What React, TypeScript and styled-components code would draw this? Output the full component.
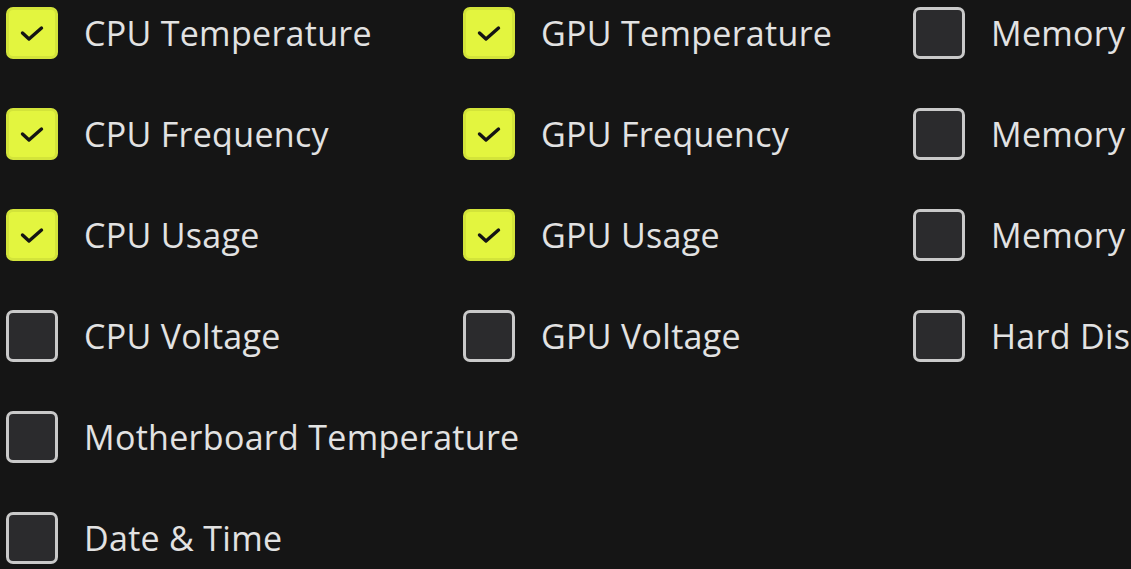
import React from "react";
import styled, { createGlobalStyle } from "styled-components";

const GlobalStyle = createGlobalStyle`
  html, body {
    margin: 0;
    padding: 0;
    background: #151515;
  }
  body {
    font-family: "Open Sans", "Noto Sans", sans-serif;
  }
`;

type Item = { label: string; checked: boolean };

const columns: Item[][] = [
  [
    { label: "CPU Temperature", checked: true },
    { label: "CPU Frequency", checked: true },
    { label: "CPU Usage", checked: true },
    { label: "CPU Voltage", checked: false },
    { label: "Motherboard Temperature", checked: false },
    { label: "Date & Time", checked: false },
  ],
  [
    { label: "GPU Temperature", checked: true },
    { label: "GPU Frequency", checked: true },
    { label: "GPU Usage", checked: true },
    { label: "GPU Voltage", checked: false },
  ],
  [
    { label: "Memory", checked: false },
    { label: "Memory", checked: false },
    { label: "Memory", checked: false },
    { label: "Hard Disk", checked: false },
  ],
];

function App() {
  return (
    <Page>
      <GlobalStyle />
      {columns.map((col, i) => (
        <Column key={i} $width={i === 0 ? 457 : i === 1 ? 450 : 240}>
          {col.map((item, j) => (
            <Option key={j}>
              <Box $checked={item.checked}>
                {item.checked && (
                  <svg width="26" height="20" viewBox="0 0 26 20">
                    <path
                      d="M3.5 10 L10 16 L22.5 5"
                      fill="none"
                      stroke="#141414"
                      strokeWidth="3.4"
                      strokeLinecap="round"
                      strokeLinejoin="round"
                    />
                  </svg>
                )}
              </Box>
              <Label>{item.label}</Label>
            </Option>
          ))}
        </Column>
      ))}
    </Page>
  );
}

const Page = styled.div`
  display: flex;
  padding: 6px 0 0 6px;
  height: 569px;
  box-sizing: border-box;
  overflow: hidden;
`;

const Column = styled.div<{ $width: number }>`
  display: flex;
  flex-direction: column;
  gap: 48px;
  width: ${(p) => p.$width}px;
  flex-shrink: 0;
`;

const Option = styled.div`
  display: flex;
  align-items: center;
  gap: 26px;
  height: 53px;
  white-space: nowrap;
`;

const Box = styled.div<{ $checked: boolean }>`
  width: 52px;
  height: 52px;
  box-sizing: border-box;
  border-radius: 7px;
  flex-shrink: 0;
  display: flex;
  align-items: center;
  justify-content: center;
  background: ${(p) => (p.$checked ? "#e3f53f" : "#2b2b2d")};
  border: 3px solid ${(p) => (p.$checked ? "#d3e43a" : "#c9c9c9")};
`;

const Label = styled.span`
  color: #e2e2e2;
  font-size: 34px;
  letter-spacing: 0.3px;
  line-height: 1;
`;

export default App;
